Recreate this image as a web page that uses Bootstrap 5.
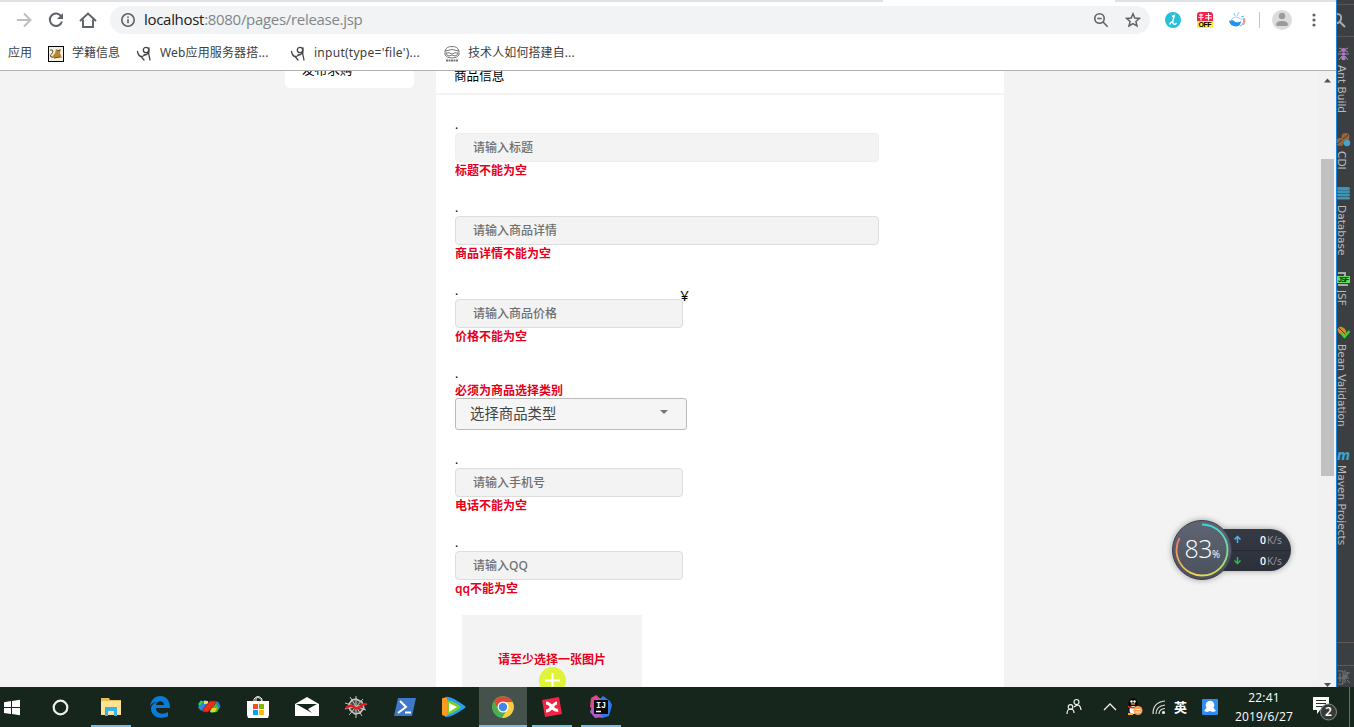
<!DOCTYPE html>
<html lang="zh-CN">
<head>
<meta charset="utf-8">
<title>release.jsp</title>
<link href="https://cdn.jsdelivr.net/npm/bootstrap@5.3.0/dist/css/bootstrap.min.css" rel="stylesheet">
<style>
body{width:1354px;height:727px;overflow:hidden;font:12px/16px "Noto Sans","Noto Sans CJK SC",sans-serif;color:#000;background:#f3f3f3}
svg{display:block;flex:none}
.desk{height:687px}
.browser{width:1336px;background:#fff}
.tabs-edge{height:2px;background:#dee1e6}
.tabs-edge i{width:232px;height:2px;margin-left:883px;background:#fff}
.tools{height:36px;padding:0 6px 0 8px}
.tool{width:32px;height:32px;display:flex;align-items:center;justify-content:center;flex:none}
.omni{width:1040px;height:28px;margin-left:6px;border-radius:14px;background:#f1f3f4;padding:0 1px 0 10px}
.url{font:15px/20px "Open Sans","Noto Sans",sans-serif;letter-spacing:-.3px;color:#80868b;margin:-2px 0 0 8px}
.url b{font-weight:400;color:#202124}
.marks{height:32px;padding:0 0 1px 8px;font-size:12px;color:#3c4043}
.marks span{white-space:nowrap;margin-top:-1px}
.view{height:617px;border-top:1px solid #b1b1b1;background:#f3f3f3}
.side{width:129px;height:17px;margin-left:285px;border-radius:0 0 5px 5px;background:#fff;overflow:hidden;padding-left:17px;font-size:12.6px}
.side p{margin:-9px 0 0;line-height:16px}
.panel{width:568px;margin-left:22px;background:#fff;overflow:hidden}
.panel-title{height:24px;border-bottom:2px solid #f3f3f3;padding-left:18px;font-size:12.6px;line-height:10px}
.fields{padding:22px 0 0 19px}
.grp{height:83px}
.grp.pick{height:86px}
.dotline{height:16px;line-height:16px}
.field{display:block;width:228px;height:29px;border:1px solid #ddd;border-radius:4px;background:#f3f3f3;padding:0 17px;font-size:12px;font-weight:500;line-height:27px;outline:0}
.field::placeholder{color:#707070;opacity:1}
.field.wide{width:424px}
.field.plain{border-color:#eee}
.err{height:18px;line-height:18px;color:#e6001b;font-weight:600}
.pick .err{height:16px;line-height:17px}
.choose{width:232px;height:32px;border:1px solid #bbb;border-radius:3px;background:#f5f5f5;padding:0 18px 0 14px;font-size:14.4px;color:#444}
.upload{width:180px;height:110px;margin:0 0 0 7px;background:#f3f3f3;padding-top:36px;text-align:center}
.scroll{width:17px;background:#f1f1f1;padding:6px 2px 0}
.thumb{height:317px;width:13px;background:#c1c1c1;margin-top:76px}
.ide{width:18px;background:#3c3f41;border-left:1px solid #1883d7;color:#bbb;font:10.6px/13px "DejaVu Sans",sans-serif;overflow:hidden}
.ide div{writing-mode:vertical-rl;width:13px;white-space:nowrap;margin-left:-2px;flex:none}
.bar{height:40px;background:#16261d}
.app{width:49.1px;height:40px;flex:none;display:flex;align-items:center;justify-content:center}
.run{background:linear-gradient(#76b9ed,#76b9ed) 50% 100%/40px 2px no-repeat}
.cur{background:linear-gradient(#76b9ed,#76b9ed) 50% 100%/48px 2px no-repeat,linear-gradient(#45514b,#45514b) 50% 0/48px 40px no-repeat}
.clock{width:74px;text-align:center;color:#fff;font:12px/19px "Open Sans","Noto Sans",sans-serif}
.gauge{position:absolute;left:1162px;top:510px;z-index:3}
</style>
</head>
<body>
<div class="desk d-flex">
 <div class="browser d-flex flex-column">
  <div class="tabs-edge d-flex"><i></i></div>
  <div class="tools d-flex align-items-center">
   <div class="tool"><svg width="16" height="16" fill="none" stroke="#bcbec0" stroke-width="2"><path d="M1 8h13M8 1.5 14.5 8 8 14.5"/></svg></div>
   <div class="tool"><svg width="16" height="16" fill="none" stroke="#5f6368" stroke-width="2"><path d="M13.2 4.2A6.2 6.2 0 1 0 14 9.5"/><path d="M15 1v6H9z" fill="#5f6368" stroke="none"/></svg></div>
   <div class="tool"><svg width="18" height="16" fill="none" stroke="#5f6368" stroke-width="1.9"><path d="M1 9 9 1.5 17 9M4 7.5V15h10V7.5"/></svg></div>
   <div class="omni d-flex align-items-center">
    <svg width="16" height="16" fill="none" stroke="#5f6368" stroke-width="1.6"><circle cx="8" cy="8" r="6.2"/><path d="M8 7.2v4M8 4.5v1.4"/></svg>
    <span class="url"><b>localhost</b>:8080/pages/release.jsp</span>
    <div class="tool ms-auto"><svg width="16" height="16" fill="none" stroke="#5f6368" stroke-width="1.6"><circle cx="6.5" cy="6.5" r="4.7"/><path d="M4.3 6.5h4.4M10 10l4.7 4.7"/></svg></div>
    <div class="tool"><svg width="16" height="16" fill="none" stroke="#5f6368" stroke-width="1.5"><path d="m8 1.8 1.8 4.2 4.6.4-3.5 3 1.1 4.5L8 11.5l-4 2.4 1.1-4.5-3.5-3L6.2 6z"/></svg></div>
   </div>
   <div class="tool" style="margin-left:7px"><svg width="16" height="16"><circle cx="8" cy="8" r="8" fill="#26c0dc"/><path d="M7 4.500 9.200 3.500 7.700 10M4.500 12.500q2-4 3.500-1.500t3.500 0" fill="none" stroke="#fff" stroke-width="1.500"/></svg></div>
   <div class="tool"><svg width="16" height="16"><rect width="16" height="12" rx="3" fill="#f2264b"/><path d="M2 3h4M4 1.500v7M1.500 5.500h5M8.500 3.500h6M8 6h7M11.500 1v7.500" stroke="#fff" stroke-width="1"/><path d="M0 9h16v7H0z" fill="#ffee32"/><text x="1.500" y="15" font-family="Liberation Sans" font-weight="700" font-size="7" textLength="13">OFF</text></svg></div>
   <div class="tool"><svg width="17" height="16" fill="none"><path d="M2 8q4-6 11 0" stroke="#9bd0f7" fill="#fff"/><path d="M0 9q5-2 6 1 4 1 6-1 0 5-5 5.500Q1 14 0 9z" fill="#2294ee"/><path d="M5 1l1 3M10 0 8 4" stroke="#8ccaf6"/><path d="M11 14q5-2 3-8M12 5l3-1" stroke="#61b5f2"/><path d="M15 6q2 4-1 7" stroke="#ed9b83" stroke-width="1.300"/></svg></div>
   <div style="width:1px;height:16px;background:#c4c7ca;margin:0 7px 0 6px"></div>
   <div class="tool" style="margin-left:-1px"><svg width="20" height="20"><circle cx="10" cy="10" r="10" fill="#dcdcdc"/><circle cx="10" cy="6" r="3.200" fill="#9b9b9b"/><path d="M4 15q0-4 6-4t6 4l-1 1H5z" fill="#9b9b9b"/></svg></div>
   <div class="tool"><svg width="4" height="16" fill="#5f6368"><circle cx="2" cy="3" r="1.600"/><circle cx="2" cy="8" r="1.600"/><circle cx="2" cy="13" r="1.600"/></svg></div>
  </div>
  <div class="marks d-flex align-items-center">
   <span style="width:40px">应用</span>
   <svg width="16" height="16"><rect x=".5" y=".5" width="15" height="15" fill="#f4f0e5" stroke="#000"/><path d="M3 12 7 7l1-4 2 1 3-1-1 4 2 5-4-1-3 1z" fill="#b98832"/><path d="M2 4q3-1 3 2l-3 4 2 1M9 5l3-1M6 12l6-1" fill="none" stroke="#65512c"/></svg>
   <span style="width:64px;margin-left:8px">学籍信息</span>
   <svg width="16" height="16" fill="none" stroke="#444" stroke-width="1.300" stroke-linecap="round"><path d="M1.500 5.500q1 5 4 5 2 0 3-1.500M5 10.500 8 14"/><circle cx="10" cy="4" r="2.700"/><path d="M13 2q-1 6 1 12M13 5q-1 4-5 4"/></svg>
   <span style="width:130px;margin-left:8px;letter-spacing:.15px">Web应用服务器搭...</span>
   <svg width="16" height="16" fill="none" stroke="#444" stroke-width="1.300" stroke-linecap="round"><path d="M1.500 5.500q1 5 4 5 2 0 3-1.500M5 10.500 8 14"/><circle cx="10" cy="4" r="2.700"/><path d="M13 2q-1 6 1 12M13 5q-1 4-5 4"/></svg>
   <span style="width:130px;margin-left:8px;letter-spacing:.27px">input(type='file')...</span>
   <svg width="16" height="16" fill="none" stroke="#777"><path d="M1 5Q2 .5 8 .5T15 5v4q-2 3-7 3T1 9zM1 5q7-3 14 0M2 7q3-1 6 1 3-2 6-1-1 3-3 3L8 9l-3 1Q3 10 2 7z"/><path d="M2 14.500h12" stroke-width="2" stroke-dasharray="2 .5"/></svg>
   <span style="margin-left:8px;letter-spacing:.1px">技术人如何搭建自...</span>
  </div>
  <div class="view d-flex">
   <div class="side"><p>发布求购</p></div>
   <div class="panel">
    <div class="panel-title">商品信息</div>
    <div class="fields">
     <div class="grp"><div class="dotline">.</div><input class="field wide plain" placeholder="请输入标题"><div class="err">标题不能为空</div></div>
     <div class="grp"><div class="dotline">.</div><input class="field wide" placeholder="请输入商品详情"><div class="err">商品详情不能为空</div></div>
     <div class="grp"><div class="dotline d-flex"><span>.</span><span style="margin:4px 0 0 222px;font-size:15px">¥</span></div><input class="field" placeholder="请输入商品价格"><div class="err">价格不能为空</div></div>
     <div class="grp pick"><div class="dotline">.</div><div class="err">必须为商品选择类别</div><div class="choose d-flex align-items-center justify-content-between"><span>选择商品类型</span><svg width="8" height="4" style="margin-top:-5px"><path d="M0 0h8L4 4z" fill="#777"/></svg></div></div>
     <div class="grp"><div class="dotline">.</div><input class="field" placeholder="请输入手机号"><div class="err">电话不能为空</div></div>
     <div class="grp" style="height:80px"><div class="dotline">.</div><input class="field" placeholder="请输入QQ"><div class="err">qq不能为空</div></div>
     <div class="upload"><div class="err">请至少选择一张图片</div><svg width="27" height="27" class="mx-auto" style="margin-top:-2px"><circle cx="13.500" cy="13.500" r="13.500" fill="#dff33b"/><path d="M6 13.500h15M13.500 6v15" stroke="#fff" stroke-width="2"/></svg></div>
    </div>
   </div>
   <div class="scroll ms-auto d-flex flex-column"><svg width="13" height="6"><path d="M3 5.500h7L6.500 1.500z" fill="#505050"/></svg><div class="thumb"></div><svg width="13" height="4" class="mt-auto"><path d="M3 0h7L6.500 4z" fill="#505050"/></svg></div>
  </div>
 </div>
 <div class="ide d-flex flex-column">
  <svg width="17" height="65"><path d="M0 4.500h17M0 36.500h17" stroke="#5b5654"/><g fill="none" stroke="#aaa" stroke-width="2"><path d="M0 14q5 0 4 5-1 4-4 4M3 22l5 5"/></g><g stroke="#9f9f9f" stroke-width=".9"><path d="m2 48 9 4M11 48l-9 4M1 54h11M2 60l3-4M11 60l-3-4"/></g><g fill="#b07ac8"><circle cx="6.500" cy="50" r="2"/><circle cx="6.500" cy="54" r="1.800"/><circle cx="6.500" cy="58" r="2.300"/></g></svg>
  <div style="height:66px">Ant Build</div>
  <svg width="14" height="20"><circle cx="8.500" cy="6" r="4" fill="#97653d"/><circle cx="3" cy="11" r="4" fill="#97653d"/><path d="m6 8 5-4M0 13l5-4" stroke="#49382c"/><circle cx="10" cy="12" r="3.200" fill="#3ea6cf"/></svg>
  <div style="height:35px">CDI</div>
  <svg width="14" height="19" fill="#3f93b5"><rect y="1" width="13" height="3" rx="1.500"/><rect y="4.300" width="13" height="2.800" rx="1.400"/><rect y="7.500" width="13" height="2.800" rx="1.400"/><rect y="10.800" width="13" height="2.800" rx="1.400"/></svg>
  <div style="height:66px">Database</div>
  <svg width="14" height="19"><path d="M1 2h7v3M1 14h10" stroke="#aaa" stroke-width="2" fill="none"/><rect y="5" width="13" height="7" fill="#62e25b"/><text x="1" y="11" font-family="Liberation Sans" font-weight="700" font-size="7" textLength="11" fill="#222">JSF</text></svg>
  <div style="height:36px">JSF</div>
  <svg width="14" height="18"><ellipse cx="5" cy="5" rx="5" ry="3.500" transform="rotate(40 5 5)" fill="#c98b32"/><path d="m1 1 8 8" stroke="#583e1b"/><path d="m5 8 2.500 3 5-6" fill="none" stroke="#22e522" stroke-width="2.200"/></svg>
  <div style="height:103px">Bean Validation</div>
  <svg width="16" height="18"><text x="0" y="13" font-family="DejaVu Sans" font-weight="700" font-style="italic" font-size="14" textLength="13" lengthAdjust="spacingAndGlyphs" fill="#3fa3cf">m</text></svg>
  <div style="height:177px">Maven Projects</div>
  <svg width="17" height="45"><path d="M0 .5h17M0 23.500h17" stroke="#5e5b59"/><path d="M1 29h5v13H1M3 31v9M6 34h5M8 28v13M1 36h11M9 31h4M11 30l-2 5M10 38l3 3" stroke="#858585" stroke-width=".8" fill="none"/></svg>
 </div>
</div>
<div class="bar d-flex align-items-center">
 <svg width="20" height="17" style="margin:0 16px 0 0"><path d="M4 3.200 11 2v6H4zM12 2l8-1.200V8h-8zM4 9h7v6l-7-1zM12 9h8v7.200L12 15z" fill="#fff"/></svg>
 <div class="app" style="width:50px;padding-right:2px"><svg width="17" height="17"><circle cx="8.500" cy="8.500" r="6.800" fill="none" stroke="#eee" stroke-width="2.200"/></svg></div>
 <div class="app run"><svg width="22" height="20"><path d="M1 1h8l1 2h11v15H1z" fill="#e9bd50"/><path d="M1 4h20v14H1z" fill="#ffe293"/><path d="M5 10h12v9h-3v-5H8v5H5z" fill="#38b3ea"/></svg></div>
 <div class="app"><svg width="22" height="22"><path d="M1 10C2 4 6 0 11 0c7 0 10 5 10 12H7c0 6 7 7 12 4v4.500C10 24 2 20 2 13c0-4 3-6 6-7-3 0-5 1-7 4zm6-1h8c0-5-7-5-8 0z" fill="#0a7bd8"/></svg></div>
 <div class="app"><svg width="24" height="18"><path d="m1 9 3-5 4-2 4 2-6 9-3-1z" fill="#2a87df"/><path d="m2 7 3-4" stroke="#3bd13b" stroke-width="2.500"/><path d="M7 3h4v3H7z" fill="#f9dd31"/><path d="m17 3 4 1 2 5-3 5-6 1-1-3z" fill="#3bbd3b"/><path d="m20 4 2.500 5" stroke="#3172df" stroke-width="2.500"/><path d="M15 10h5l-2 4h-5z" fill="#f3cf21"/><path d="M6 11 13 3h6l-1 3-7 8H6z" fill="#f32b12" stroke="#7e1a0c" stroke-width=".6"/></svg></div>
 <div class="app"><svg width="24" height="24"><path d="M8 7V4q4-5 8 0v3M10 6V3q4-2 6 4" fill="none" stroke="#eee"/><path d="M1 6h22v14l-1 3H2l-1-3z" fill="#fff"/><path d="M7 9h5v5H7z" fill="#f25022"/><path d="M13 9h5v5h-5z" fill="#7fba00"/><path d="M7 15h5v5H7z" fill="#00a4ef"/><path d="M13 15h5v5h-5z" fill="#ffb900"/></svg></div>
 <div class="app"><svg width="24" height="20"><path d="m0 7 12-7 12 7v12H0z" fill="#fff"/><path d="M1 7h21l-9 5 4 4z" fill="#16261d"/></svg></div>
 <div class="app"><svg width="24" height="24" fill="none"><path d="m12 4 6 3 2 6-4 5-5 1-5-4-1-6 3-4z" fill="#454a48" stroke="#c8c8c8" stroke-width="1.500"/><path d="M12 1v22M1 8l21 7M5 20 19 4M6 2l12 19M1 14l22-5" stroke="#c5c5c5"/><path d="M2 13q4-4 8-1 4 3 7-1 3-3 5-1" stroke="#f01812" stroke-width="2.500"/></svg></div>
 <div class="app"><svg width="24" height="20"><path d="M5 1h18l-4 18H1z" fill="#3f78c8"/><path d="m7 4 6 6-8 6M12 15.500h6" fill="none" stroke="#fff" stroke-width="2"/></svg></div>
 <div class="app"><svg width="24" height="22"><path d="M3 1q5-2 20 9 1 1 0 2Q9 22 3 21z" fill="#229ff2"/><path d="M5 4q9 2 14 7-5 5-14 8z" fill="#82cf22"/><path d="M0 3q0-2 5-1v18q-5 0-5-2z" fill="#ff9a20"/><path d="M7 7l8 4-8 5z" fill="#fff"/></svg></div>
 <div class="app cur"><svg width="22" height="22"><circle cx="11" cy="11" r="11" fill="#4baf50"/><path d="M2 5A11 11 0 0 1 20.500 6H11l-4 8z" fill="#e44335"/><path d="M11 6h9.500A11 11 0 0 1 10 22l6-10z" fill="#fbcd43"/><circle cx="11" cy="11" r="5.500" fill="#fff"/><circle cx="11" cy="11" r="4.200" fill="#4285e8"/></svg></div>
 <div class="app run"><svg width="22" height="22"><path d="m1 4 17-3 3 17-17 3z" fill="#f32443"/><path d="M5 7q3 0 6 4t6 3M5 15q3 0 6-4t5-4" fill="none" stroke="#fff" stroke-width="3"/></svg></div>
 <div class="app run"><svg width="24" height="24"><path d="m10 5 4-4 7 5 2 4-3 11-7 2-7-3z" fill="#3279e7"/><path d="m2 3 5-3 7 6-8 10-5-4z" fill="#e2458d"/><path d="m3 12-2 5 5 6 8-1z" fill="#b15bc9"/><path d="M5 5h14v14H5z" fill="#080808"/><path d="M7 16.500h5" stroke="#fff" stroke-width="1.500"/><text x="7" y="13" fill="#fff" font-family="Liberation Mono" font-weight="700" font-size="8.500">IJ</text></svg></div>
 <div class="d-flex align-items-center ms-auto" style="width:288px">
  <svg width="16" height="18" fill="none" stroke="#eee" stroke-width="1.200"><circle cx="10.500" cy="4" r="2.500"/><circle cx="4.500" cy="9" r="2.300"/><path d="M1 16q0-5 3.500-5T8 15M8 9q6-5 7 3"/></svg>
  <svg width="14" height="8" style="margin-left:21px" fill="none" stroke="#eee" stroke-width="1.300"><path d="m1 7 6-6 6 6"/></svg>
  <svg width="17" height="18" style="margin-left:9px"><ellipse cx="7" cy="8" rx="5" ry="8" fill="#080808"/><ellipse cx="7" cy="12" rx="3.500" ry="4" fill="#fff"/><circle cx="5.500" cy="3.500" r="1.200" fill="#fff"/><circle cx="8.500" cy="3.500" r="1.200" fill="#fff"/><path d="M5 6h4" stroke="#ffb200" stroke-width="1.300"/><path d="M2 7.500q5 3 10 0v2q-5 2-10 0z" fill="#e22"/><path d="M2 16h5" stroke="#ffb200" stroke-width="2"/><circle cx="12" cy="12.500" r="4.500" fill="#ff9b4c"/><path d="M9.500 11.500h5M9.500 14h5" stroke="#fff"/></svg>
  <svg width="14" height="14" style="margin-left:9px" fill="none" stroke="#ddd" stroke-width="1.200"><path d="M1 14Q1 2 13 1M4 14q0-8 9-9M7 14q0-5 6-5.500"/><circle cx="11.500" cy="12.500" r="1" fill="#fff"/></svg>
  <span class="text-white fw-bold" style="margin-left:8px;font-size:13px;width:15px">英</span>
  <svg width="16" height="16" style="margin-left:13px"><rect width="16" height="16" rx="1" fill="#2f8cf0"/><circle cx="8" cy="6" r="4.300" fill="#fff"/><path d="m5 8-3 4 3 1 3-1 3 1 3-1-3-4z" fill="#fff"/></svg>
  <div class="clock" style="margin-left:9px;letter-spacing:.15px">22:41<br>2019/6/27</div>
  <svg width="26" height="26" style="margin-left:12px;margin-top:3px"><path d="M0 1h16v13H7l-3 4v-4H0z" fill="#fff"/><path d="M3 4.500h10M3 7.500h10M3 10.500h7" stroke="#26342c"/><circle cx="15.500" cy="16" r="8" fill="#343c38" stroke="#888"/><text x="15.500" y="20" text-anchor="middle" font-family="Noto Sans" font-weight="600" font-size="12" fill="#fff">2</text></svg>
  <div style="width:1px;height:40px;background:#66716b;margin-left:10px"></div>
 </div>
</div>
<svg class="gauge" width="140" height="80">
 <defs><linearGradient id="pillbg" x2="0" y2="1"><stop stop-color="#343944"/><stop offset="1" stop-color="#2c303a"/></linearGradient><linearGradient id="dial" x2="0" y2="1"><stop stop-color="#5f6572"/><stop offset="1" stop-color="#4b505d"/></linearGradient><linearGradient id="arcr" x2="0" y2="1"><stop stop-color="#39d8d8"/><stop offset=".65" stop-color="#8fdf89"/><stop offset="1" stop-color="#dcda59"/></linearGradient><linearGradient id="arcl" x2="0" y2="1"><stop stop-color="#ee746c"/><stop offset=".5" stop-color="#f4a15d"/><stop offset="1" stop-color="#efd44c"/></linearGradient><filter id="soft" x="-20%" y="-20%" width="140%" height="140%"><feGaussianBlur stdDeviation="3"/></filter></defs>
 <g fill="#000" opacity=".35" filter="url(#soft)"><rect x="40" y="19" width="89" height="42" rx="21"/><circle cx="40" cy="40" r="30"/></g>
 <rect x="40" y="19" width="89" height="42" rx="21" fill="url(#pillbg)"/><path d="M68 40.500h60" stroke="#272b33"/>
 <circle cx="40" cy="40" r="29.500" fill="url(#dial)" stroke="#3b404b"/>
 <path d="M40 14.500a25.500 25.500 0 0 1 0 51" fill="none" stroke="url(#arcr)" stroke-width="1.800"/>
 <path d="M40 65.500A25.500 25.500 0 0 1 17.500 28" fill="none" stroke="url(#arcl)" stroke-width="1.800"/>
 <text x="22.500" y="48" font-family="Open Sans" font-weight="300" font-size="25" textLength="28" fill="#fff">83</text><text x="50" y="48" font-family="Open Sans" font-size="10" textLength="8" lengthAdjust="spacingAndGlyphs" fill="#fff">%</text>
 <path d="M75.500 33v-6M72.500 29.500l3-3 3 3" fill="none" stroke="#4fb5ef" stroke-width="1.500"/><path d="M75.500 47v6M72.500 50.500l3 3 3-3" fill="none" stroke="#2dbd48" stroke-width="1.500"/>
 <g font-family="Open Sans" font-size="10.500"><text x="98" y="34" font-weight="600" fill="#fff">0</text><text x="105" y="34" textLength="15" lengthAdjust="spacingAndGlyphs" fill="#999da6">K/s</text><text x="98" y="55" font-weight="600" fill="#fff">0</text><text x="105" y="55" textLength="15" lengthAdjust="spacingAndGlyphs" fill="#999da6">K/s</text></g>
</svg>
<script src="https://cdn.jsdelivr.net/npm/bootstrap@5.3.0/dist/js/bootstrap.bundle.min.js"></script>
</body>
</html>
